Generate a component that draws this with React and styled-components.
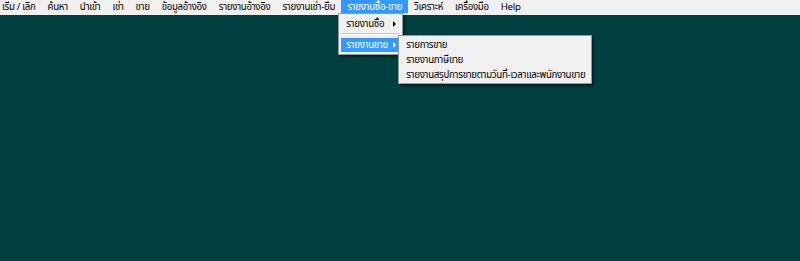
import React from "react";
import styled, { createGlobalStyle } from "styled-components";

const Global = createGlobalStyle`
  html, body { margin: 0; padding: 0; width: 800px; height: 261px; overflow: hidden; }
  body { font-family: Tahoma, "Noto Sans Thai", "Noto Sans", "DejaVu Sans", sans-serif; font-size: 9.7px; letter-spacing: -0.3px; }
  #root { width: 800px; height: 261px; }
  * { box-sizing: border-box; }
`;

const Window = styled.div`
  display: flex;
  flex-direction: column;
  width: 800px;
  height: 261px;
  background: #003f3f;
`;

const MenuBar = styled.div`
  display: flex;
  align-items: flex-start;
  height: 15px;
  background: #f0f0f0;
  padding-left: 2px;
`;

const TopItem = styled.div`
  position: relative;
  display: flex;
  align-items: center;
  height: 13px;
  padding: 0 6px 0 ${(p) => p.$padLeft ?? 6}px;
  color: ${(p) => (p.$active ? "#ffffff" : "#000000")};
  background: ${(p) => (p.$active ? "#3399ff" : "transparent")};
  white-space: nowrap;
`;

const Desktop = styled.div`
  flex: 1;
`;

const Dropdown = styled.div`
  position: absolute;
  left: ${(p) => p.$left}px;
  top: ${(p) => p.$top}px;
  width: ${(p) => p.$width}px;
  background: #f0f0f0;
  border: 1px solid #979797;
  box-shadow: 2px 2px 2px rgba(0, 0, 0, 0.45);
  padding: ${(p) => p.$padY ?? 2}px 2px;
  display: flex;
  flex-direction: column;
  z-index: 2;
  color: #000;
`;

const MenuRow = styled.div`
  position: relative;
  display: flex;
  align-items: center;
  height: ${(p) => p.$h ?? 15}px;
  padding: 0 4px 0 ${(p) => p.$indent ?? 5}px;
  color: ${(p) => (p.$active ? "#ffffff" : "#000000")};
  background: ${(p) => (p.$active ? "#3399ff" : "transparent")};
  white-space: nowrap;
`;

const Label = styled.span`
  flex: 1;
`;

const Arrow = styled.span`
  width: 0;
  height: 0;
  border-top: 3px solid transparent;
  border-bottom: 3px solid transparent;
  border-left: 3px solid ${(p) => (p.$light ? "#ffffff" : "#000000")};
  margin-left: 4px;
`;

const Separator = styled.div`
  height: 2px;
  margin: 1px 1px 3px 1px;
  border-top: 1px solid #c8c8c8;
  border-bottom: 1px solid #ffffff;
`;

const topItems = [
  "เริ่ม / เลิก",
  "ค้นหา",
  "นำเข้า",
  "เช่า",
  "ขาย",
  "ข้อมูลอ้างอิง",
  "รายงานอ้างอิง",
  "รายงานเช่า-ยืม",
  "รายงานซื้อ-ขาย",
  "วิเคราะห์",
  "เครื่องมือ",
  "Help",
];

function SalesMenu() {
  return (
    <Dropdown $left={-3} $top={13} $width={65} $padY={2}>
      <MenuRow $h={16}>
        <Label>รายงานซื้อ</Label>
        <Arrow />
      </MenuRow>
      <Separator />
      <MenuRow $active $h={14}>
        <Label>รายงานขาย</Label>
        <Arrow $light />
        <Dropdown $left={57} $top={-3} $width={194} $padY={1}>
          <MenuRow $indent={5}>
            <Label>รายการขาย</Label>
          </MenuRow>
          <MenuRow $indent={5}>
            <Label>รายงานภาษีขาย</Label>
          </MenuRow>
          <MenuRow $indent={5}>
            <Label>รายงานสรุปการขายตามวันที่-เวลาและพนักงานขาย</Label>
          </MenuRow>
        </Dropdown>
      </MenuRow>
    </Dropdown>
  );
}

export default function App() {
  return (
    <>
      <Global />
      <Window>
        <MenuBar>
          {topItems.map((t, i) => {
            const active = t === "รายงานซื้อ-ขาย";
            return (
              <TopItem key={t} $active={active} $padLeft={i === 0 ? 0 : undefined}>
                {t}
                {active && <SalesMenu />}
              </TopItem>
            );
          })}
        </MenuBar>
        <Desktop />
      </Window>
    </>
  );
}
